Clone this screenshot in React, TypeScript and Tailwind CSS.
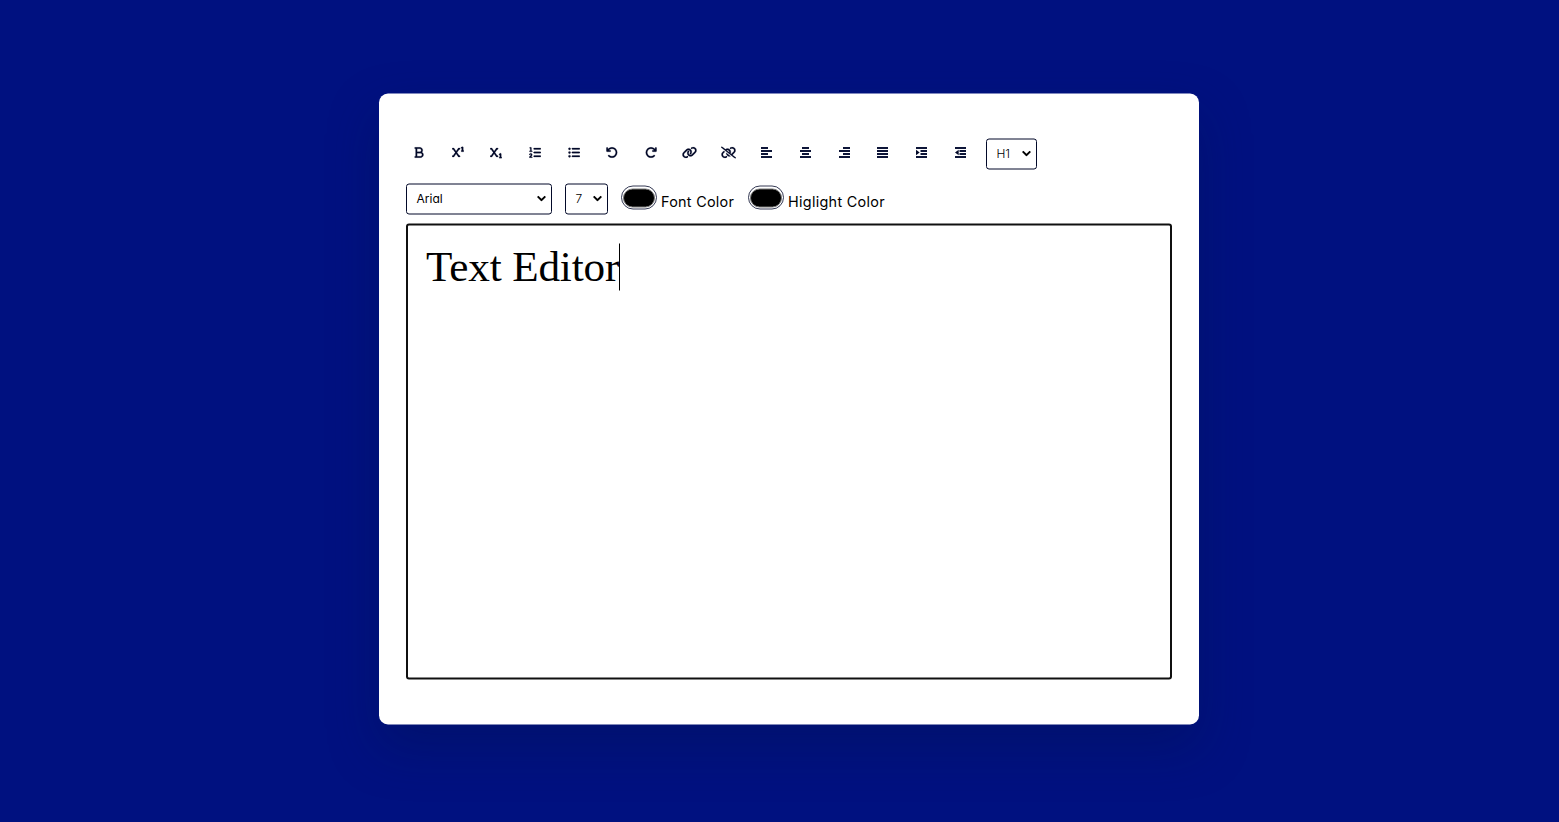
import { type ReactNode } from "react";
import {
  FaBold, FaSuperscript, FaSubscript, FaListOl, FaListUl, FaArrowRotateLeft, FaArrowRotateRight,
  FaLink, FaLinkSlash,
} from "react-icons/fa6";

const glyphTools = [
  { name: "Bold", Icon: FaBold, size: "h-3 w-3" },
  { name: "Superscript", Icon: FaSuperscript, size: "h-3 w-3" },
  { name: "Subscript", Icon: FaSubscript, size: "h-3 w-3" },
  { name: "Ordered list", Icon: FaListOl, size: "h-3 w-3" },
  { name: "Unordered list", Icon: FaListUl, size: "h-3 w-3" },
  { name: "Undo", Icon: FaArrowRotateLeft, size: "h-3 w-3" },
  { name: "Redo", Icon: FaArrowRotateRight, size: "h-3 w-3" },
  { name: "Link", Icon: FaLink, size: "h-3 w-[15px]" },
  { name: "Unlink", Icon: FaLinkSlash, size: "h-3 w-[15px]" },
];

// Each bar tool is four 2px lines on an 11px grid, plus an arrow for the indent pair.
const barTools = [
  { name: "Align left", d: "M0 1.5h7M0 4.5h11M0 7.5h7M0 10.5h11", arrow: "" },
  { name: "Align center", d: "M2 1.5h7M0 4.5h11M2 7.5h7M0 10.5h11", arrow: "" },
  { name: "Align right", d: "M4 1.5h7M0 4.5h11M4 7.5h7M0 10.5h11", arrow: "" },
  { name: "Justify", d: "M0 1.5h11M0 4.5h11M0 7.5h11M0 10.5h11", arrow: "" },
  { name: "Indent", d: "M0 1.5h11M4.5 4.5h6.5M4.5 7.5h6.5M0 10.5h11", arrow: "M0 3.3L3.7 6L0 8.7z" },
  { name: "Outdent", d: "M0 1.5h11M4.5 4.5h6.5M4.5 7.5h6.5M0 10.5h11", arrow: "M3.7 3.3L0 6L3.7 8.7z" },
];

function Tool({ name, children }: { name: string; children: ReactNode }) {
  return (
    <button aria-label={name} className="flex h-[26px] w-[38.68px] items-center pb-1 text-[#020929]">
      <span className="flex w-[25.8px] justify-center">{children}</span>
    </button>
  );
}

function Dropdown({ className, children }: { className: string; children: ReactNode }) {
  return (
    <button className={`flex h-[31px] items-center justify-between rounded-[3px] border border-[#020929] pr-[5px] pb-0.5 pl-[9.5px] text-[12px] ${className}`}>
      {children}
      <svg className="h-[6px] w-[9px]" viewBox="0 0 9 6" fill="none" stroke="black" strokeWidth="2">
        <path d="M0.7 0.9L4.5 4.6L8.3 0.9" />
      </svg>
    </button>
  );
}

function ColorField({ label, className }: { label: string; className: string }) {
  return (
    <div className="flex items-start">
      <span className="mt-[2px] flex h-6 w-9 items-center justify-center rounded-full border border-[#020929]/80">
        <span className="h-[19px] w-8 rounded-full border border-[#777] bg-black" />
      </span>
      <span className={`mt-[7px] ml-1 text-[14.4px] leading-[22px] whitespace-nowrap ${className}`}>{label}</span>
    </div>
  );
}

export default function App() {
  return (
    <div className="flex h-[822px] justify-center bg-[#001180] pt-[94px] pl-[19px] font-['Inter',sans-serif] text-black [font-feature-settings:'cv11']">
      <main className="h-[631px] w-[820px] [transform:translateY(-0.5px)] rounded-[9px] bg-white px-[27px] pt-[45px] shadow-[0_22px_50px_rgba(1,19,78,0.35)]">
        <div className="flex h-[31px] items-center">
          <div className="flex w-[580px]">
            {glyphTools.map(({ name, Icon, size }) => (
              <Tool key={name} name={name}>
                <Icon className={size} stroke="currentColor" strokeWidth="10" />
              </Tool>
            ))}
            {barTools.map(({ name, d, arrow }) => (
              <Tool key={name} name={name}>
                <svg className="h-3 w-[11px]" viewBox="0 0 11 12">
                  <path d={d} stroke="#0d1538" strokeWidth="2" />
                  {arrow && <path d={arrow} fill="#020929" />}
                </svg>
              </Tool>
            ))}
          </div>
          <Dropdown className="w-[51px]">
            <span className="font-light tracking-[-0.2px]">H1</span>
          </Dropdown>
        </div>
        <div className="mt-3.5 flex h-[31px]">
          <Dropdown className="w-[146px]"><span>Arial</span></Dropdown>
          <Dropdown className="ml-[13px] w-[43px]"><span className="font-light">7</span></Dropdown>
          <div className="ml-[13px] flex gap-3.5">
            <ColorField label="Font Color" className="w-[73px] tracking-[0.27px]" />
            <ColorField label="Higlight Color" className="w-[98px] tracking-[0.3px]" />
          </div>
        </div>
        <div className="mt-[9px] h-[456px] w-[766px] rounded-[3px] border-2 border-[#101010] px-[18px] pt-[18px]">
          <div className="flex h-[46px] items-center font-['Liberation_Serif',serif] text-[43.2px] leading-[46px] tracking-[-0.15px]">
            <span className="h-[46px]">Text Editor</span>
            <span className="h-[47px] w-px bg-black" />
          </div>
        </div>
      </main>
    </div>
  );
}
